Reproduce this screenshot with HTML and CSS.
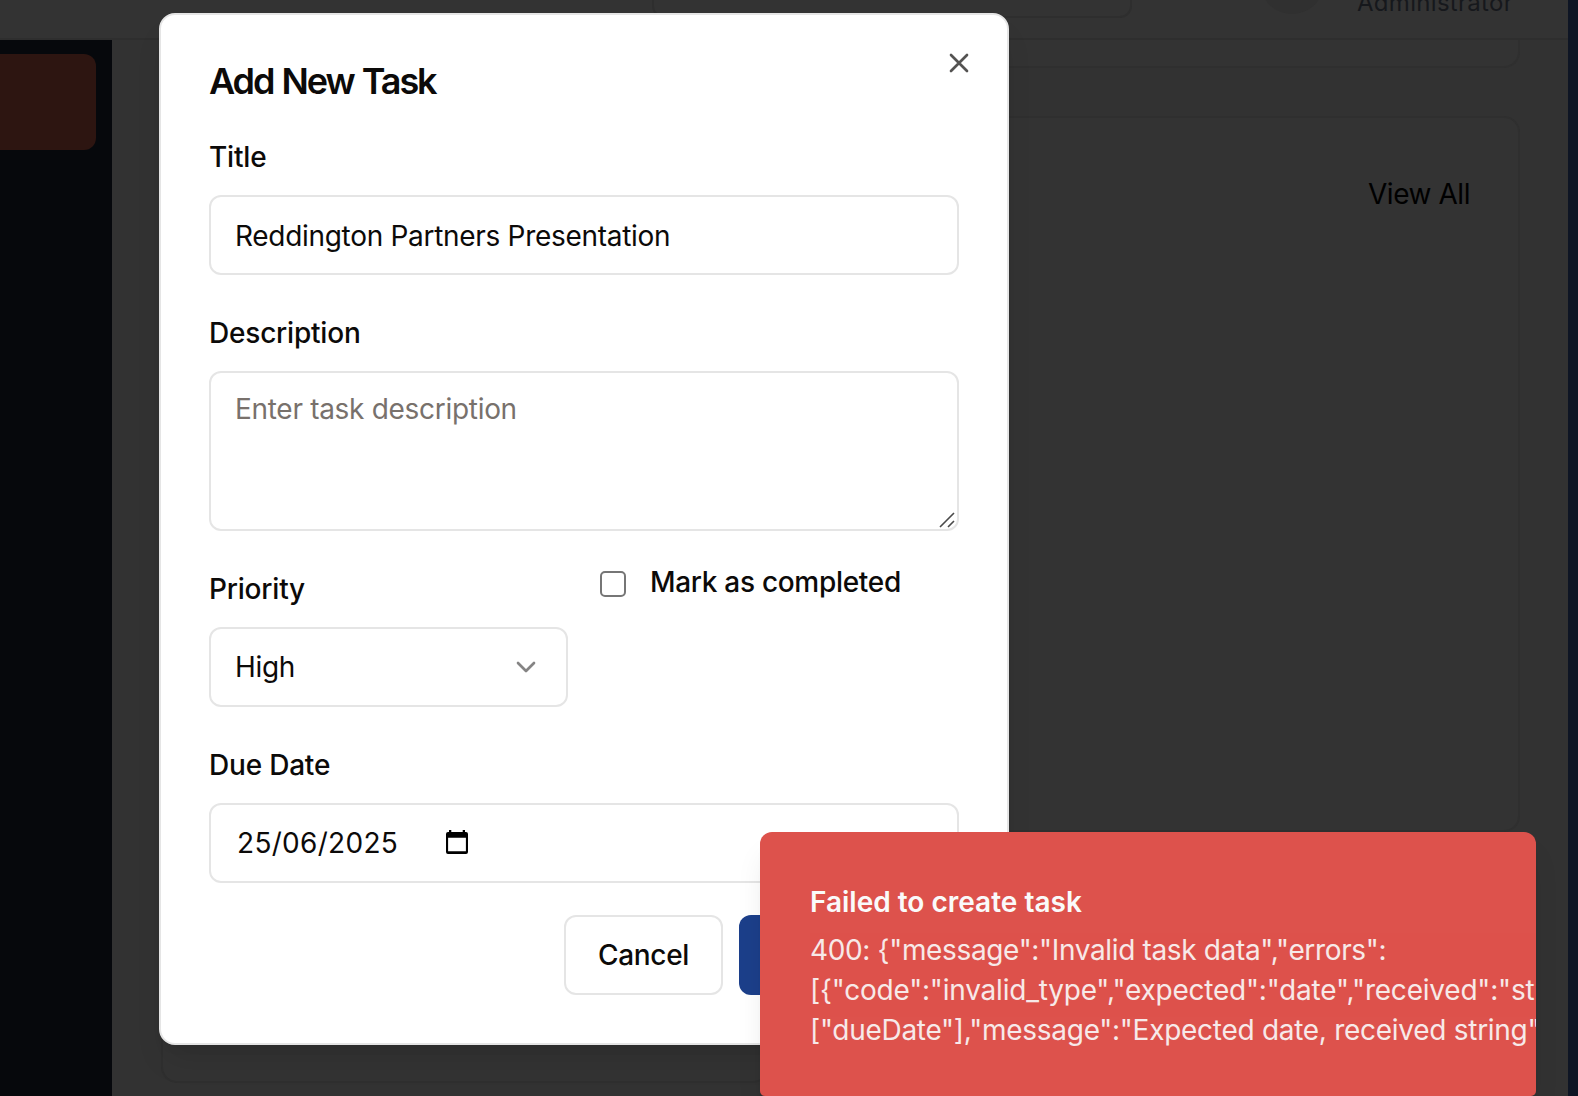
FILE: index.html
```html
<!DOCTYPE html>
<html lang="en">
<head>
<meta charset="utf-8">
<title>Add New Task</title>
<link rel="stylesheet" href="styles.css">
</head>
<body>
<div class="page">
  <div class="app">
    <header class="topbar">
      <div class="search"></div>
      <div class="avatar"></div>
      <div class="role">Administrator</div>
    </header>
    <div class="workspace">
      <nav class="sidebar"><div class="nav-active"></div></nav>
      <main class="main">
        <section class="card card-stats"></section>
        <div class="columns">
          <section class="card card-left"></section>
          <section class="card card-right"><span class="view-all">View All</span></section>
        </div>
      </main>
    </div>
  </div>
  <div class="edge"></div>
</div>

<div class="modal" role="dialog" aria-labelledby="modal-title">
  <svg class="close" viewBox="0 0 24 24"><path d="M18 6 6 18M6 6l12 12"/></svg>
  <h2 class="modal-title" id="modal-title">Add New Task</h2>
  <div class="form">
    <div class="field">
      <div class="label-row"><label class="label" for="title">Title</label></div>
      <input class="control" id="title" type="text" value="Reddington Partners Presentation">
    </div>
    <div class="field">
      <div class="label-row"><label class="label" for="desc">Description</label></div>
      <div class="area-wrap">
        <textarea class="control area" id="desc" placeholder="Enter task description"></textarea>
        <svg class="grip" viewBox="0 0 16 16"><path d="M1 15 15 1M9 15l6-6"/></svg>
      </div>
    </div>
    <div class="split">
      <div class="field">
        <div class="label-row"><span class="label">Priority</span></div>
        <div class="control select">
          <span>High</span>
          <svg class="chevron" viewBox="0 0 24 24"><path d="m6 9 6 6 6-6"/></svg>
        </div>
      </div>
      <div class="check-row">
        <input class="checkbox" id="done" type="checkbox">
        <label class="label check-label" for="done">Mark as completed</label>
      </div>
    </div>
    <div class="field">
      <div class="label-row"><span class="label">Due Date</span></div>
      <div class="control date">
        <span class="date-text">25/06/2025</span>
        <svg class="calendar" viewBox="0 0 22 24"><path fill-rule="evenodd" d="M3 0h2.3v2h11.4V0H19v2h1a2 2 0 0 1 2 2v18a2 2 0 0 1-2 2H2a2 2 0 0 1-2-2V4a2 2 0 0 1 2-2h1zM2.1 7.7v13.5h17.8V7.7z"/></svg>
      </div>
    </div>
    <div class="actions">
      <button class="btn btn-cancel">Cancel</button>
      <button class="btn btn-submit" aria-label="Submit"></button>
    </div>
  </div>
</div>

<div class="toast" role="alert">
  <div class="toast-title">Failed to create task</div>
  <div class="toast-text">
    <div>400: {"message":"Invalid task data","errors":</div>
    <div class="line-code">[{"code":"invalid_type","expected":"date","received":"st</div>
    <div class="line-path">["dueDate"],"message":"Expected date, received string"</div>
  </div>
</div>
</body>
</html>
```
FILE: styles.css
```css
* { box-sizing: border-box; }

body {
  margin: 0;
  width: 1578px;
  height: 1096px;
  overflow: hidden;
  background: #323232;
  color: #0c0a09;
  font-family: Inter, "Liberation Sans", sans-serif;
  font-size: 28px;
  line-height: 40px;
  letter-spacing: -.3px;
}

/* Dimmed dashboard behind the dialog */
.page { display: flex; height: 1096px; }
.app { flex: 1; display: flex; flex-direction: column; }
.edge { width: 10px; background: #0e1524; }

.topbar {
  height: 40px;
  display: flex;
  align-items: flex-end;
  justify-content: flex-end;
  padding-right: 56px;
  background: #333;
  border-bottom: 2px solid #2e2e2e;
}
.search {
  width: 480px;
  height: 80px;
  margin-bottom: 20px;
  border: 2px solid #2e2e2e;
  border-radius: 12px;
}
.avatar {
  width: 64px;
  height: 64px;
  margin: 0 33px 24px 128px;
  border-radius: 50%;
  background: #303030;
}
.role {
  width: 155px;
  margin-bottom: 19px;
  font-size: 24px;
  line-height: 32px;
  letter-spacing: .3px;
  white-space: nowrap;
  color: #16181c;
}

.workspace { flex: 1; display: flex; }
.sidebar { width: 112px; padding: 14px 16px 0 0; background: #06080c; }
.nav-active { height: 96px; border-radius: 0 12px 12px 0; background: #2d1511; }

.main { flex: 1; padding: 0 48px 0 49px; }
.card { border: 2px solid #2f2f2f; border-radius: 16px; background: #333; }
.card-stats { height: 28px; border-top: 0; border-radius: 0 0 16px 16px; }
.columns { display: flex; align-items: flex-start; gap: 48px; margin-top: 48px; }
.card-left { flex: 1; height: 967px; }
.card-right {
  flex: 1;
  height: 716px;
  padding: 56px 48px 0;
  text-align: right;
}
.view-all { color: #000; letter-spacing: -.45px; }

/* Dialog */
.modal {
  position: absolute;
  left: 159px;
  top: 13px;
  width: 850px;
  height: 1032px;
  padding: 48px;
  border: 2px solid #e5e5e5;
  border-radius: 16px;
  background: #fff;
  box-shadow: 0 20px 30px -6px rgba(0, 0, 0, .1), 0 8px 12px -8px rgba(0, 0, 0, .1);
}
.modal-title {
  margin: 0 0 32px;
  font-size: 36px;
  line-height: 36px;
  font-weight: 600;
  letter-spacing: -2.1px;
  word-spacing: 1.3px;
}
.close {
  position: absolute;
  right: 32px;
  top: 32px;
  width: 32px;
  height: 32px;
  fill: none;
  stroke: #545352;
  stroke-width: 2;
  stroke-linecap: round;
}

.form { display: flex; flex-direction: column; gap: 32px; }
.field { display: flex; flex-direction: column; gap: 16px; }
.label-row { height: 48px; font-size: 32px; line-height: 50px; }
.label { font-size: 28px; font-weight: 500; letter-spacing: -.2px; }

.control {
  display: block;
  width: 100%;
  height: 80px;
  margin: 0;
  padding: 2px 24px 0;
  border: 2px solid #e5e5e5;
  border-radius: 12px;
  outline: 0;
  background: #fff;
  color: inherit;
  font: inherit;
  letter-spacing: inherit;
}
.area-wrap { position: relative; }
.area { height: 160px; padding-top: 16px; resize: none; }
.area::placeholder { color: #78716c; opacity: 1; }
.grip {
  position: absolute;
  right: 4px;
  bottom: 3px;
  width: 16px;
  height: 16px;
  fill: none;
  stroke: #4a4a4a;
  stroke-width: 1.6;
}

.split { display: grid; grid-template-columns: 1fr 1fr; gap: 32px; }
.select { display: flex; align-items: center; justify-content: space-between; padding-top: 0; }
.chevron {
  width: 32px;
  height: 32px;
  fill: none;
  stroke: #858484;
  stroke-width: 2;
  stroke-linecap: round;
  stroke-linejoin: round;
}

.check-row { display: flex; align-items: flex-start; gap: 24px; }
.checkbox {
  appearance: none;
  width: 26px;
  height: 26px;
  margin: 8px 0 0;
  border: 2px solid #767676;
  border-radius: 5px;
  background: #fff;
}
.check-label { margin-top: -1px; letter-spacing: -.3px; }

.date { display: flex; align-items: center; gap: 48px; padding-top: 0; }
.date-text { padding-left: 2px; letter-spacing: .3px; }
.calendar { width: 22px; height: 24px; margin-bottom: 2px; fill: #000; }

.actions { display: flex; justify-content: flex-end; gap: 16px; }
.btn {
  height: 80px;
  padding: 0;
  border: 2px solid #e5e5e5;
  border-radius: 12px;
  background: #fff;
  color: inherit;
  font: inherit;
  font-weight: 500;
  letter-spacing: inherit;
}
.btn-cancel { width: 159px; }
.btn-submit { width: 220px; border: 0; background: #1c3f8a; }

/* Error notification */
.toast {
  position: absolute;
  left: 760px;
  top: 832px;
  width: 776px;
  height: 264px;
  padding: 50px 0 0 50px;
  overflow: hidden;
  border-radius: 12px 12px 5px 5px;
  background: #dd524c;
  color: #fafafa;
  box-shadow: 0 20px 30px -6px rgba(0, 0, 0, .1), 0 8px 12px -8px rgba(0, 0, 0, .1);
}
.toast-title { font-weight: 600; letter-spacing: 0; }
.toast-text { margin-top: 8px; white-space: nowrap; letter-spacing: -.35px; opacity: .9; }
.line-code { letter-spacing: -.21px; }
.line-path { letter-spacing: -.28px; }
```
